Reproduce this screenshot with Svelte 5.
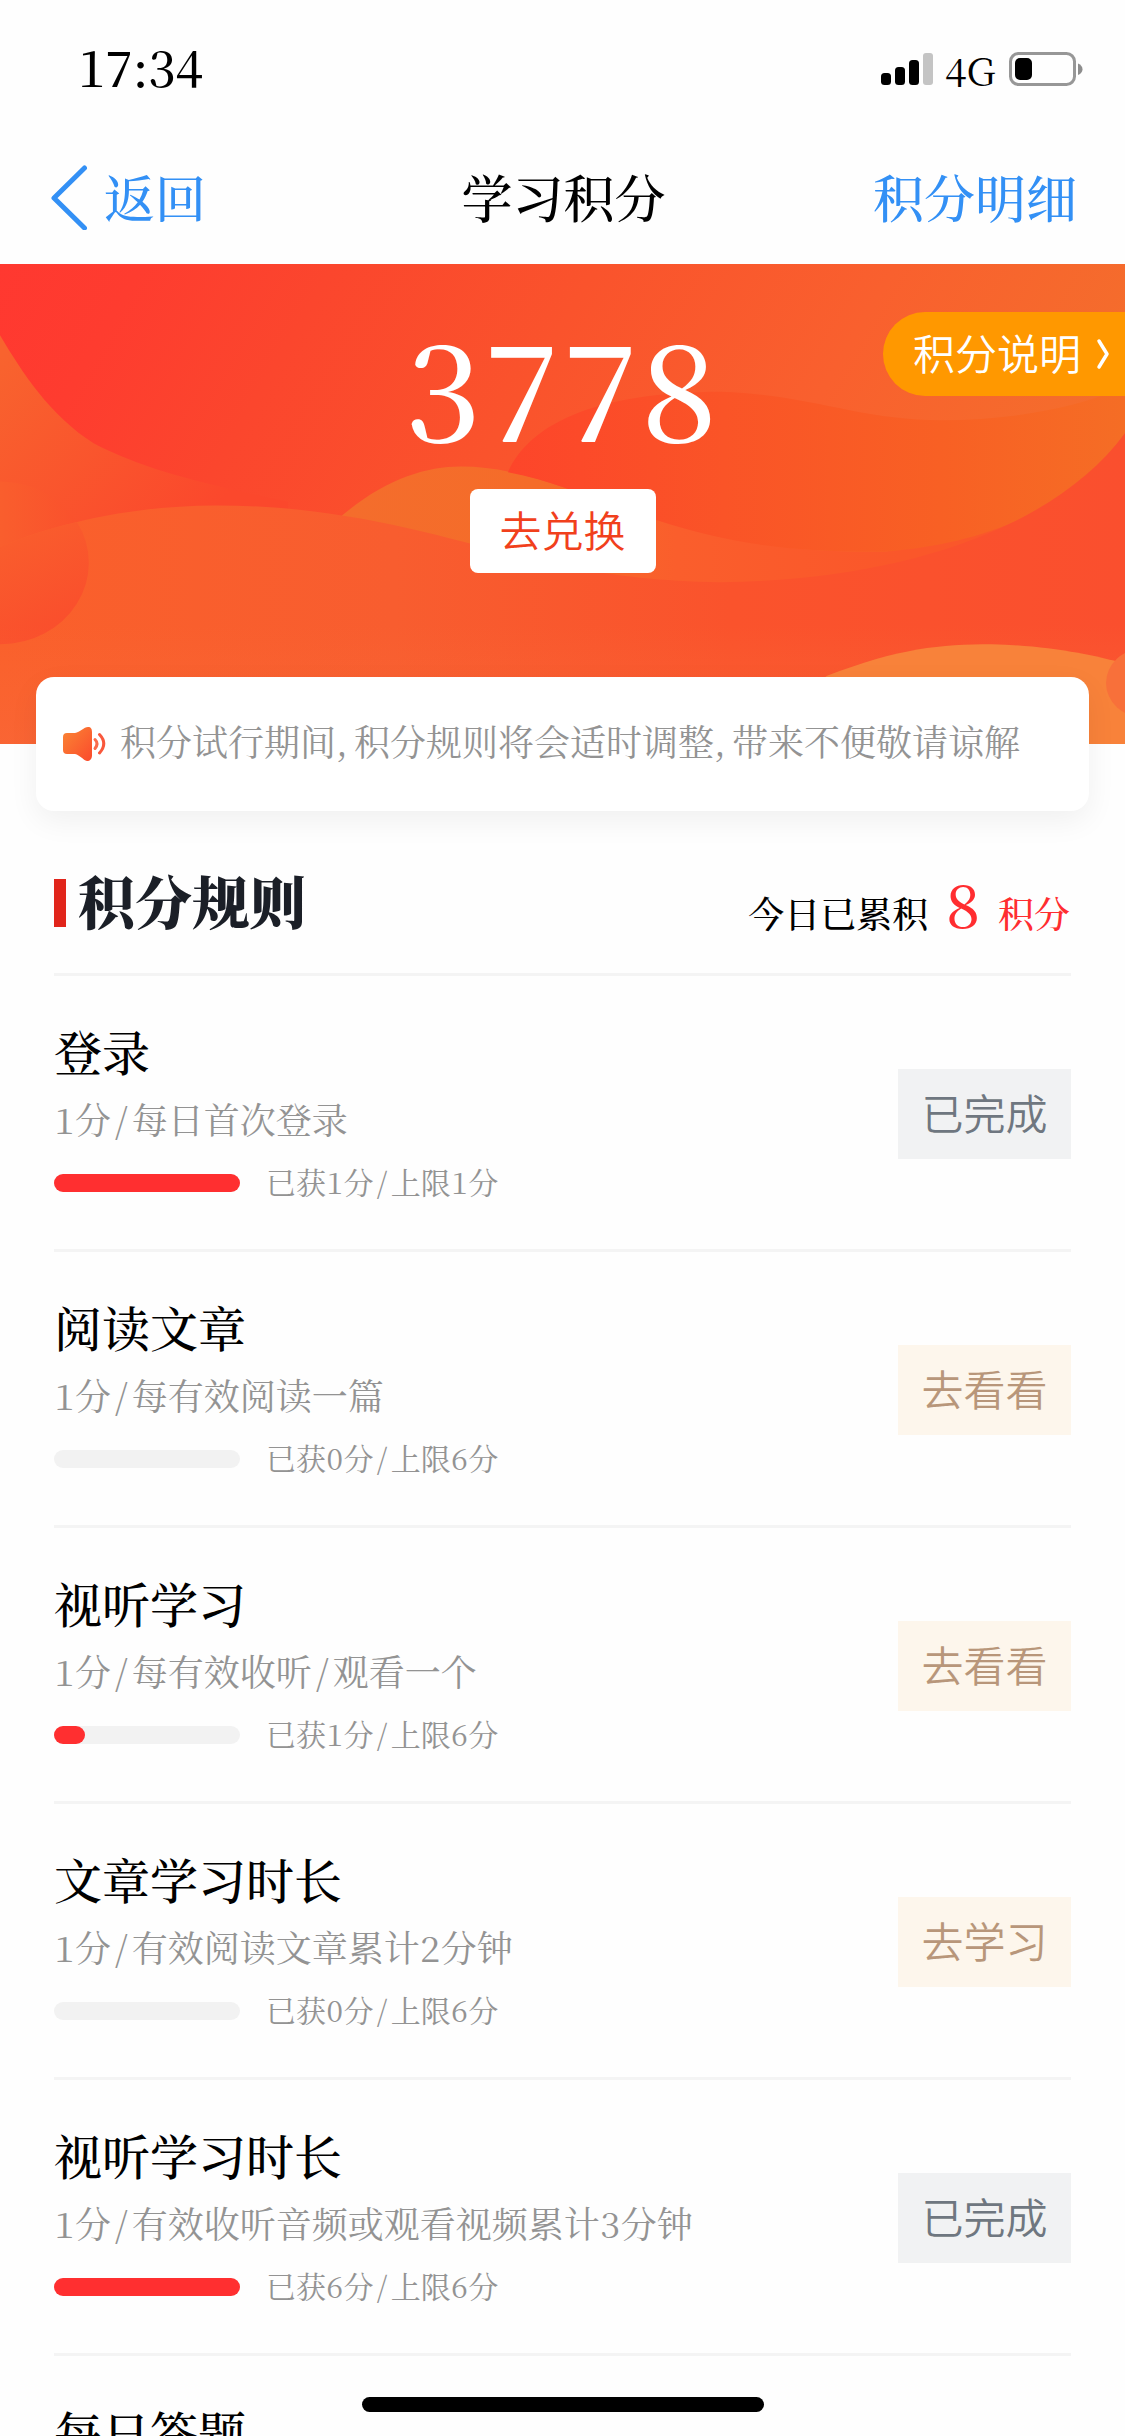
<script>
  const rules = [
    { title: '登录', desc: '1分/每日首次登录', got: 1, max: 1, action: '已完成', done: true },
    { title: '阅读文章', desc: '1分/每有效阅读一篇', got: 0, max: 6, action: '去看看' },
    { title: '视听学习', desc: '1分/每有效收听/观看一个', got: 1, max: 6, action: '去看看' },
    { title: '文章学习时长', desc: '1分/有效阅读文章累计2分钟', got: 0, max: 6, action: '去学习' },
    { title: '视听学习时长', desc: '1分/有效收听音频或观看视频累计3分钟', got: 6, max: 6, action: '已完成', done: true }
  ];
  const nextTitle = '每日答题';
  // Splits a label so that digits and slashes each get a fixed-width cell.
  const runs = (text) => text.split(/([0-9/])/).filter(Boolean);
</script>

{#snippet spaced(text)}{#each runs(text) as run}{#if /[\d/]/.test(run)}<span class="cell">{run}</span>{:else}{run}{/if}{/each}{/snippet}

<div class="screen">
  <div class="status">
    <span class="time">17:34</span>
    <div class="indicators">
      <svg class="signal" width="52" height="34" viewBox="0 0 52 34">
        <rect x="0" y="21" width="10" height="12" rx="3.5" />
        <rect x="14" y="15" width="10" height="18" rx="3.5" />
        <rect x="28" y="8" width="10" height="25" rx="3.5" />
        <rect x="42" y="1" width="10" height="32" rx="3" fill="#c4c4c4" />
      </svg>
      <span class="net">4G</span>
      <svg width="74" height="34" viewBox="0 0 74 34">
        <rect x="1.5" y="1.5" width="64" height="31" rx="8" fill="none" stroke="#979797" stroke-width="3" />
        <rect x="6" y="6" width="17" height="22" rx="5" />
        <path d="M69 11.5c6 2.500 6 9 0 11.500z" fill="#8d8d8d" />
      </svg>
    </div>
  </div>

  <header class="nav">
    <div class="back">
      <svg width="38" height="68" viewBox="0 0 38 68"><path d="M34.500 6L4 36l30.500 30" fill="none" stroke="#3390f5" stroke-width="5" stroke-linecap="round" stroke-linejoin="round" /></svg>
      <span>返回</span>
    </div>
    <h1>学习积分</h1>
    <span class="detail">积分明细</span>
  </header>

  <section class="hero">
    <svg class="waves" viewBox="0 0 1125 480" preserveAspectRatio="none">
      <defs>
        <linearGradient id="base" x1="0" y1="0" x2="1" y2="0.25">
          <stop offset="0" stop-color="#ff3830" /><stop offset=".12" stop-color="#fe3c2f" /><stop offset=".28" stop-color="#fb462d" /><stop offset=".5" stop-color="#fa532c" /><stop offset=".75" stop-color="#f9602e" /><stop offset="1" stop-color="#f46e2c" />
        </linearGradient>
        <linearGradient id="left" gradientUnits="userSpaceOnUse" x1="0" y1="100" x2="200" y2="280">
          <stop offset="0" stop-color="#f8632e" /><stop offset="1" stop-color="#fb482c" />
        </linearGradient>
        <linearGradient id="hill" x1="0" y1="0" x2="1" y2="0">
          <stop offset="0" stop-color="#fa602b" /><stop offset=".35" stop-color="#f85d2f" /><stop offset=".65" stop-color="#fa532c" /><stop offset="1" stop-color="#fa4f2e" />
        </linearGradient>
        <linearGradient id="inner" x1="0" y1="0" x2="1" y2="0">
          <stop offset="0" stop-color="#fd452a" /><stop offset=".35" stop-color="#fa5427" /><stop offset=".7" stop-color="#f86024" /><stop offset="1" stop-color="#f56d25" />
        </linearGradient>
        <linearGradient id="band" gradientUnits="userSpaceOnUse" x1="342" y1="0" x2="900" y2="0">
          <stop offset="0" stop-color="#f46d2c" /><stop offset=".35" stop-color="#f56c29" /><stop offset=".6" stop-color="#fa5e2c" /><stop offset="1" stop-color="#fa572a" />
        </linearGradient>
        <linearGradient id="upper" x1="0" y1="0" x2="1" y2="0">
          <stop offset=".5" stop-color="#f95e2d" /><stop offset="1" stop-color="#fa4f2c" />
        </linearGradient>
        <linearGradient id="ball" x1=".2" y1="0" x2=".6" y2="1">
          <stop offset="0" stop-color="#f95e2d" /><stop offset="1" stop-color="#fa4d2c" />
        </linearGradient>
        <linearGradient id="foot" x1="0" y1="0" x2="0" y2="1">
          <stop offset="0" stop-color="#fa6a35" stop-opacity="0" /><stop offset="1" stop-color="#f9683a" stop-opacity=".6" />
        </linearGradient>
      </defs>
      <rect width="1125" height="480" fill="url(#base)" />
      <g transform="scale(1 .925)">
        <path d="M0 77C22 117 50 164 94 194C144 222 198 236 288 257L288 300H0Z" fill="url(#left)" />
        <circle cx="0" cy="323" r="88" fill="url(#upper)" />
        <path d="M342 272C385 233 425 219 461 219C530 219 590 256 657 277C740 304 800 312 884 311C960 300 1060 230 1125 150V400H342Z" fill="url(#band)" />
        <path d="M508 225C528 176 590 138 722 138C812 142 860 169 942 169C1010 168 1070 158 1125 133V183C1080 250 1010 300 884 311C780 312 720 299 657 277C600 259 560 235 508 225Z" fill="url(#inner)" />
        <path d="M0 306C60 278 140 261 216 261C370 261 480 310 560 326C620 338 660 343 720 344C890 342 1050 292 1125 183V520H0Z" fill="url(#hill)" />
        <path d="M0 306Q40 288 77 279A88 88 0 0 1 0 411Z" fill="url(#ball)" />
        <rect y="390" width="1125" height="130" fill="url(#foot)" />
        <path d="M827 445C900 415 940 411 992 411C1050 413 1090 422 1125 432V520H740Z" fill="#f8823a" />
        <circle cx="1143" cy="453" r="37" fill="#f8703a" />
      </g>
    </svg>
    <div class="score">3778</div>
    <button class="redeem">去兑换</button>
    <div class="info">
      <span>积分说明</span>
      <svg width="14" height="32" viewBox="0 0 14 32"><path d="M3 3l8 13-8 13" fill="none" stroke="#fff" stroke-width="3.500" stroke-linecap="round" stroke-linejoin="round" /></svg>
    </div>
  </section>

  <div class="notice">
    <svg width="43" height="36" viewBox="0 0 43 36">
      <defs><linearGradient id="horn" x1="0" y1="0" x2="1" y2="1"><stop offset="0" stop-color="#fa8634" /><stop offset="1" stop-color="#fb4a2c" /></linearGradient></defs>
      <path d="M4 7H12C17 6 21 1 25 1C28 1 29 3 29 6V29C29 33 27 35 24 35C20 34 17 29 12 28H4Q0 28 0 24V11Q0 7 4 7Z" fill="url(#horn)" />
      <path d="M32 13.500Q36 17.500 32 22.500" fill="none" stroke="#f96c4c" stroke-width="3" stroke-linecap="round" />
      <path d="M36.500 8.500Q45 17.500 36.500 27" fill="none" stroke="#f9583c" stroke-width="3" stroke-linecap="round" />
    </svg>
    <span>积分试行期间, 积分规则将会适时调整, 带来不便敬请谅解</span>
  </div>

  <main>
    <div class="heading">
      <h2>积分规则</h2>
      <div class="today"><span>今日已累积</span><b>8</b><em>积分</em></div>
    </div>
    {#each rules as rule}
      <div class="rule">
        <div class="body">
          <h3>{rule.title}</h3>
          <p>{@render spaced(rule.desc)}</p>
          <div class="progress">
            <div class="track"><div class="fill" style="width: {(rule.got / rule.max) * 100}%"></div></div>
            <span>{@render spaced(`已获${rule.got}分/上限${rule.max}分`)}</span>
          </div>
        </div>
        <button class:done={rule.done}>{rule.action}</button>
      </div>
    {/each}
    <h3 class="next">{nextTitle}</h3>
  </main>
  <div class="home"></div>
</div>

<style>
  :global(body) { margin: 0; background: #fefefe; }
  .screen {
    position: relative; width: 1125px; height: 2436px; overflow: hidden;
    display: flex; flex-direction: column; background: #fefefe; color: #000;
    font-family: "Noto Serif CJK SC", "Liberation Serif", "Noto Sans CJK SC", serif;
    font-weight: 500;
  }
  h1, h2, h3, p { margin: 0; font-weight: 500; }
  button { border: 0; padding: 0; }

  .status { height: 132px; flex: none; padding: 5px 42px 0 78px; box-sizing: border-box; display: flex; justify-content: space-between; align-items: center; }
  .time { font-size: 49px; line-height: 60px; padding-bottom: 6px; letter-spacing: -.3px; }
  .indicators { display: flex; align-items: center; }
  .signal { margin-right: 12px; }
  .net { font-size: 39px; line-height: 44px; width: 64px; font-weight: 400; }

  .nav { height: 132px; flex: none; padding: 0 48px 4px 50px; box-sizing: border-box; display: grid; grid-template-columns: 1fr auto 1fr; align-items: center; font-size: 51px; line-height: 60px; }
  .nav h1 { font-size: 51px; }
  .back { display: flex; align-items: center; gap: 16px; color: #3390f5; }
  .detail { color: #3390f5; text-align: right; }

  .hero { position: relative; height: 480px; flex: none; display: flex; flex-direction: column; align-items: center; }
  .waves { position: absolute; inset: 0; width: 100%; height: 100%; }
  .score { position: relative; margin-top: 41px; height: 184px; line-height: 158px; font-size: 135px; letter-spacing: 3px; color: #fff; }
  .redeem { position: relative; width: 186px; height: 84px; border-radius: 8px; background: #fff; color: #f1401c; font: 42px/80px "Noto Sans CJK SC", sans-serif; font-weight: 350; padding-bottom: 4px; }
  .info { position: absolute; top: 48px; right: 0; width: 242px; height: 84px; padding: 0 15px 0 30px; box-sizing: border-box; border-radius: 42px 0 0 42px; background: #ff9800; color: #fff; display: flex; align-items: center; justify-content: space-between; font: 42px/78px "Noto Sans CJK SC", sans-serif; font-weight: 350; }
  .info span { padding-bottom: 5px; }

  .notice { position: relative; flex: none; margin: -67px 36px 0; height: 134px; padding-left: 27px; border-radius: 18px; background: #fff; box-shadow: 0 10px 30px rgba(0, 0, 0, .06); display: flex; align-items: center; gap: 14px; font-size: 36px; font-weight: 400; color: #939393; white-space: nowrap; word-spacing: -3px; }
  .notice span { padding-bottom: 7px; }

  main { padding: 0 54px; display: flex; flex-direction: column; }
  .heading { height: 165px; padding-top: 13px; box-sizing: border-box; display: flex; justify-content: space-between; align-items: center; border-bottom: 3px solid #f4f4f4; }
  h2 { display: flex; align-items: center; gap: 12px; font-size: 57px; line-height: 66px; font-weight: 900; color: #1b1f27; }
  h2::before { content: ""; width: 12px; height: 48px; margin-top: 8px; background: #e1251b; }
  .today { display: flex; align-items: baseline; margin: 18px 1px 0 0; font-size: 36px; line-height: 66px; }
  .today b { font-size: 60px; font-weight: 500; color: #ff2d30; margin: 0 18px 0 18px; }
  .today em { font-style: normal; color: #ff2d30; }

  .rule { height: 276px; flex: none; box-sizing: border-box; border-bottom: 3px solid #f4f4f4; display: flex; justify-content: space-between; align-items: center; padding-top: 3px; }
  h3 { font-size: 48px; line-height: 66px; }
  .next { padding-top: 43px; }
  .body { display: flex; flex-direction: column; }
  p { padding-top: 3px; font-size: 36px; font-weight: 400; line-height: 64px; color: #939393; white-space: nowrap; }
  .progress { display: flex; align-items: center; gap: 26px; font-size: 30px; font-weight: 400; line-height: 60px; color: #939393; }
  .track { width: 186px; height: 18px; margin-top: 5px; border-radius: 9px; background: #f2f2f2; }
  .fill { height: 100%; border-radius: 9px; background: #ff2f30; }
  .cell { display: inline-block; width: .58em; text-align: center; }
  .rule button { width: 173px; height: 90px; margin-bottom: 1px; background: #fdf6ec; color: #b8967a; font: 42px/85px "Noto Sans CJK SC", sans-serif; font-weight: 350; padding-bottom: 5px; }
  .rule button.done { background: #f1f2f3; color: #6f7780; }

  .home { position: absolute; left: 362px; bottom: 24px; width: 402px; height: 15px; border-radius: 8px; background: #000; }
</style>
